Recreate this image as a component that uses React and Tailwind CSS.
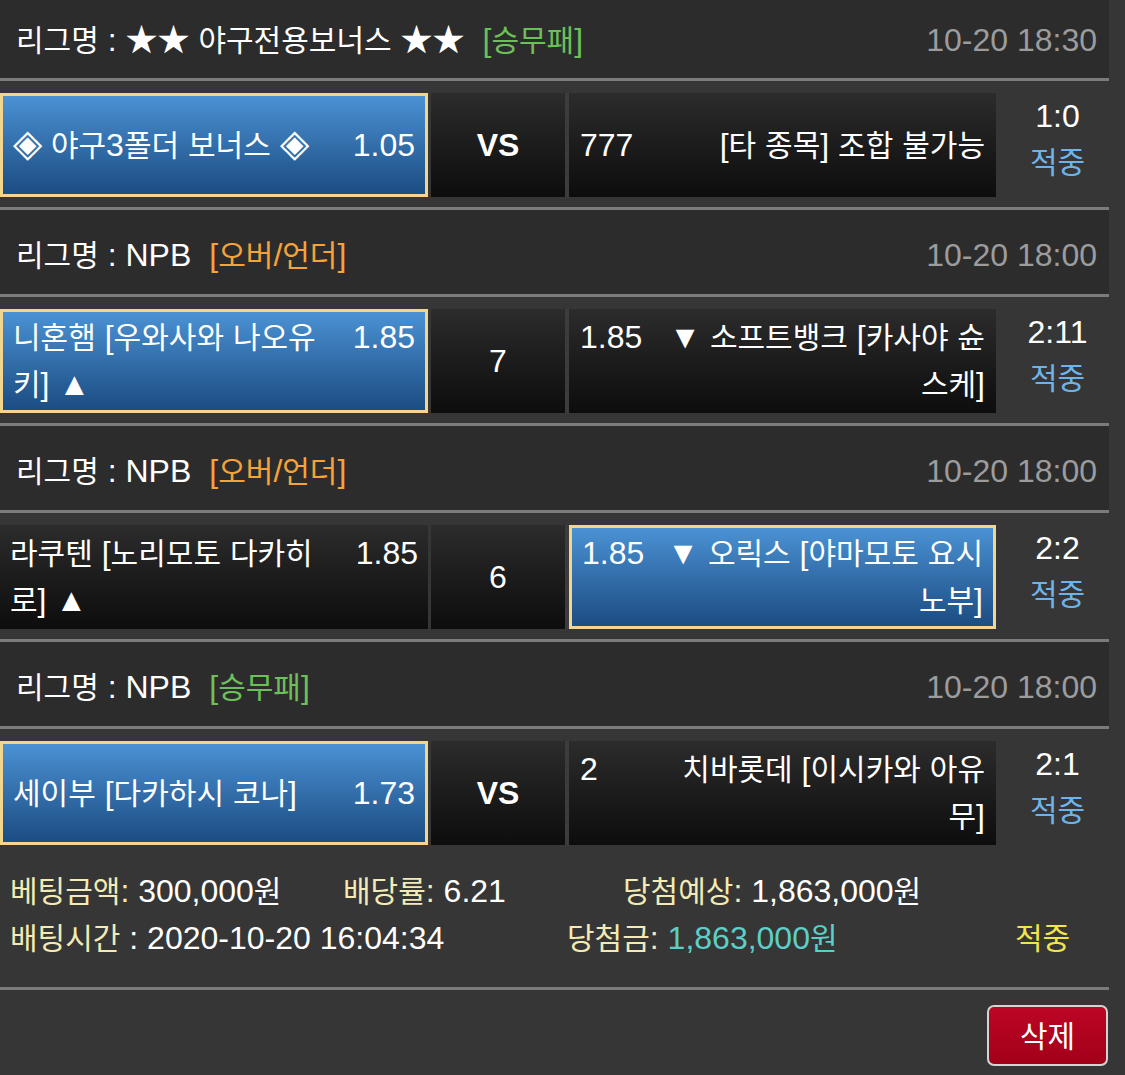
const matches = [
  {
    league: "★★ 야구전용보너스 ★★",
    type: "[승무패]",
    typeColor: "text-[#6cc05a]",
    date: "10-20 18:30",
    home: { lines: ["◈ 야구3폴더 보너스 ◈"], odds: "1.05" },
    away: { lines: ["[타 종목] 조합 불가능"], odds: "777" },
    mid: "VS",
    pick: "home",
    score: "1:0",
  },
  {
    league: "NPB",
    type: "[오버/언더]",
    typeColor: "text-[#f5a33a]",
    date: "10-20 18:00",
    home: { lines: ["니혼햄 [우와사와 나오유", "키] ▲"], odds: "1.85" },
    away: { lines: ["▼ 소프트뱅크 [카사야 슌", "스케]"], odds: "1.85" },
    mid: "7",
    pick: "home",
    score: "2:11",
  },
  {
    league: "NPB",
    type: "[오버/언더]",
    typeColor: "text-[#f5a33a]",
    date: "10-20 18:00",
    home: { lines: ["라쿠텐 [노리모토 다카히", "로] ▲"], odds: "1.85" },
    away: { lines: ["▼ 오릭스 [야마모토 요시", "노부]"], odds: "1.85" },
    mid: "6",
    pick: "away",
    score: "2:2",
  },
  {
    league: "NPB",
    type: "[승무패]",
    typeColor: "text-[#6cc05a]",
    date: "10-20 18:00",
    home: { lines: ["세이부 [다카하시 코나]"], odds: "1.73" },
    away: { lines: ["치바롯데 [이시카와 아유", "무]"], odds: "2" },
    mid: "VS",
    pick: "home",
    score: "2:1",
  },
]

// hangul runs get a slightly smaller size so they match the narrower korean face,
// the ◈ marks are drawn a bit larger like the original
const T = ({ children }) =>
  String(children)
    .split(/([\u3131-\u318e\uac00-\ud7a3]+|◈)/)
    .map((part, i) => {
      if (part === "◈")
        return (
          <span key={i} className="text-[38px] leading-none">
            {part}
          </span>
        )
      if (/[\u3131-\u318e\uac00-\ud7a3]/.test(part))
        return (
          <span key={i} className="text-[30px]">
            {part}
          </span>
        )
      return part
    })

const blue = "border-[3px] border-[#f2d58e] bg-linear-to-b from-[#4b92d4] to-[#1c4c82]"
const dark = "bg-linear-to-b from-[#2c2c2c] to-[#0d0d0d]"

const LeagueHeader = ({ m, first }) => (
  <div
    className={`flex items-center justify-between bg-[#2c2c2c] border-b-[3px] border-[#7b7b7b] pl-[16px] pr-[12px] ${
      first ? "h-[81px] pt-[2px]" : "h-[87px] pt-[6px]"
    }`}
  >
    <div className="flex items-baseline whitespace-nowrap">
      <span className="text-white">
        <T>{`리그명 : ${m.league}`}</T>
      </span>
      <span className={`ml-[18px] ${m.typeColor}`}>
        <T>{m.type}</T>
      </span>
    </div>
    <span className="text-[#9c9c9c]">{m.date}</span>
  </div>
)

const MatchRow = ({ m, last }) => (
  <div
    className={`flex items-stretch pt-[12px] pb-[10px] ${
      last ? "" : "border-b-[3px] border-[#7b7b7b]"
    }`}
  >
    <div
      className={`w-[428px] min-h-[104px] flex flex-col justify-center px-[10px] ${
        m.pick === "home" ? blue : dark
      }`}
    >
      <div className="flex items-start justify-between text-white">
        <div className="whitespace-nowrap">
          {m.home.lines.map((l) => (
            <div key={l}>
              <T>{l}</T>
            </div>
          ))}
        </div>
        <span>{m.home.odds}</span>
      </div>
    </div>
    <div
      className={`ml-[3px] w-[134px] flex items-center justify-center text-white ${dark} ${
        m.mid === "VS" ? "font-bold" : ""
      }`}
    >
      {m.mid}
    </div>
    <div className="w-[4px] bg-[#3c3c3c]" />
    <div
      className={`w-[427px] min-h-[104px] flex flex-col justify-center ${
        m.pick === "away" ? `${blue} px-[10px]` : `${dark} px-[11px]`
      }`}
    >
      <div className="flex items-start justify-between text-white">
        <span>{m.away.odds}</span>
        <div className="whitespace-nowrap text-right">
          {m.away.lines.map((l) => (
            <div key={l}>
              <T>{l}</T>
            </div>
          ))}
        </div>
      </div>
    </div>
    <div className="flex-1 flex flex-col items-center text-center pl-[10px]">
      <span className="text-white">{m.score}</span>
      <span className="text-[#6eb4ec]">
        <T>적중</T>
      </span>
    </div>
  </div>
)

export default function App() {
  return (
    <div className="min-h-screen bg-[#363636] font-['Liberation_Sans','Noto_Sans_CJK_KR',sans-serif] text-[32px] leading-[46px]">
      <div className="w-[1109px]">
        {matches.map((m, i) => (
          <div key={i}>
            <LeagueHeader m={m} first={i === 0} />
            <MatchRow m={m} last={i === matches.length - 1} />
          </div>
        ))}

        <div className="pt-[13px] pb-[25px] pl-[10px] border-b-[3px] border-[#7b7b7b] leading-[47px]">
          <div className="flex whitespace-nowrap">
            <div className="w-[333px]">
              <span className="text-[#f3eab4]">
                <T>베팅금액:</T>
              </span>
              <span className="text-white">
                <T> 300,000원</T>
              </span>
            </div>
            <div className="w-[280px]">
              <span className="text-[#f3eab4]">
                <T>배당률:</T>
              </span>
              <span className="text-white"> 6.21</span>
            </div>
            <div>
              <span className="text-[#f3eab4]">
                <T>당첨예상:</T>
              </span>
              <span className="text-white">
                <T> 1,863,000원</T>
              </span>
            </div>
          </div>
          <div className="flex whitespace-nowrap">
            <div className="w-[557px]">
              <span className="text-[#f3eab4]">
                <T>배팅시간</T>
              </span>
              <span className="text-white"> : 2020-10-20 16:04:34</span>
            </div>
            <div className="w-[448px]">
              <span className="text-[#f3eab4]">
                <T>당첨금:</T>
              </span>
              <span className="text-[#5ccfc6]">
                <T> 1,863,000원</T>
              </span>
            </div>
            <span className="text-[#f2e44e]">
              <T>적중</T>
            </span>
          </div>
        </div>

        <div className="flex justify-end pt-[15px] pr-[1px] pb-[10px]">
          <button className="w-[121px] h-[61px] rounded-[7px] border-[2px] border-[#d4d4d4] bg-linear-to-b from-[#bd0626] to-[#a2001a] text-white leading-none">
            <T>삭제</T>
          </button>
        </div>
      </div>
    </div>
  )
}
